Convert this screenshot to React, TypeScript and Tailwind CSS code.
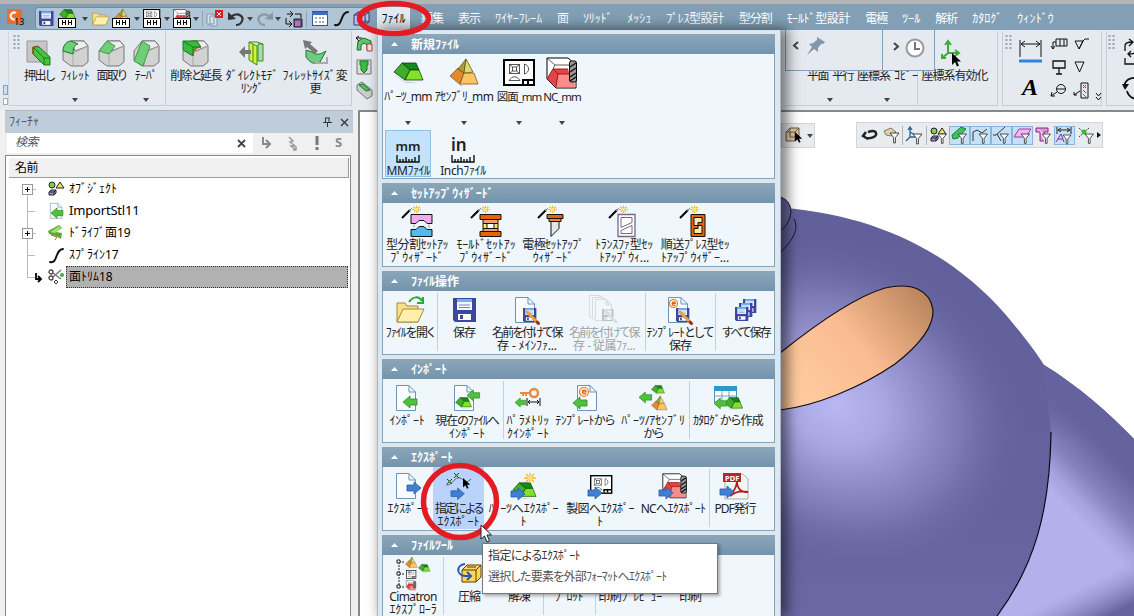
import React, { useLayoutEffect, useRef, useState } from "react";

type Kids = { children?: React.ReactNode };

/* Text run fitted to a given width by letter spacing. */
function T({ w, t, className = "" }: { w: number; t: string; className?: string }) {
  const ref = useRef<HTMLSpanElement>(null);
  const [ls, setLs] = useState(0);
  useLayoutEffect(() => {
    if (ref.current) setLs((w - ref.current.offsetWidth) / t.length);
  }, [w, t]);
  return (
    <span ref={ref} className={"inline-block shrink-0 whitespace-nowrap [font-feature-settings:'palt'] " + className} style={{ letterSpacing: ls }}>
      {t}
    </span>
  );
}

function I({ w = 32, h = 32, children, className = "" }: Kids & { w?: number; h?: number; className?: string }) {
  return (
    <svg width={w} height={h} viewBox={`0 0 ${w} ${h}`} className={"block shrink-0 overflow-visible " + className} fill="none">
      {children}
    </svg>
  );
}
function G({ x = 0, y = 0, s = 1, children }: Kids & { x?: number; y?: number; s?: number }) {
  return <g transform={`translate(${x} ${y}) scale(${s})`}>{children}</g>;
}
const Caret = ({ className = "" }: { className?: string }) => (
  <svg width="6" height="4" viewBox="0 0 6 4" className={"block shrink-0 " + className}><path d="M0 0H6L3 4Z" fill="#444" /></svg>
);

/* ---- drawing pieces ---- */
const Page = () => <path d="M.5.5H13L19.5 7V25.5H.5ZM13 .5V7H19.5" fill="#f8fbff" stroke="#6d93b5" />;
const ArrL = () => <path d="M0 6 7 0V3H14V9H7V12Z" fill="#4fc13c" stroke="#2b8c28" strokeWidth=".8" />;
const ArrR = () => <path d="M14 6 7 0V3H0V9H7V12Z" fill="#3f7fd4" stroke="#2a5da8" strokeWidth=".8" />;
const Part = () => (
  <g strokeLinejoin="round" stroke="#0f3a10" strokeWidth=".8">
    <path d="M0 12 11 20H26L14 21Z" fill="#888" stroke="none" opacity=".5" />
    <path d="M9 1H23L26 8H17Z" fill="#148a1e" />
    <path d="M9 1 17 8 12 18 1 10Z" fill="#3fae2a" />
    <path d="M17 8H26L30 18H12Z" fill="#7fe32a" />
  </g>
);
const Asm = () => (
  <g strokeLinejoin="round">
    <path d="M0 18 14 27H29L12 27Z" fill="#999" opacity=".5" />
    <path d="M1 17 9 9 15 14 11 25Z" fill="#e58a2c" stroke="#7a4610" strokeWidth=".7" />
    <path d="M15 14H25L29 25H11Z" fill="#ffc466" stroke="#7a4610" strokeWidth=".7" />
    <path d="M17 0 9 10 15 14Z" fill="#a8a030" stroke="#554c10" strokeWidth=".7" />
    <path d="M17 0 24 13 15 14Z" fill="#e0dc66" stroke="#554c10" strokeWidth=".7" />
  </g>
);
const Dwg = () => (
  <g stroke="#444" strokeWidth=".9">
    <rect x="1" y="1" width="30" height="25" fill="#fff" stroke="#000" strokeWidth="2" />
    <rect x="6.500" y="5.500" width="10" height="9" /><rect x="9.500" y="8" width="4" height="4" />
    <path d="M6.500 5.500 9.500 8M16.500 5.500 13.500 8M6.500 14.500 9.500 12M16.500 14.500 13.500 12M21.500 5V15C27 13 27 7 21.500 5M6 21.500H17C14 16.500 9 16.500 6 21.500" />
    <path d="M19 21H30M20 21V25M25 21V25" stroke="#000" strokeWidth="2" />
  </g>
);
const Nc = () => (
  <g strokeLinejoin="round">
    <path d="M1 1H22L30 8V31H10L1 22Z" fill="#fff" stroke="#000" />
    <path d="M1 22 7 12H22L28 30H10Z" fill="#e04646" />
    <path d="M12 17H25L30 30H10Z" fill="#fa8c8c" />
    <path d="M7 12H22M7 12 12 17H25M12 17 10 30M7 12 1 22" stroke="#a01010" strokeWidth=".9" />
    <path d="M1 1 9 8H23M9 8 7 12" stroke="#333" strokeWidth=".8" />
    <rect x="23.500" y="4" width="7" height="21" rx="2" fill="#999" stroke="#000" />
    <path d="M24 10 30 6M24 15 30 11M24 20 30 16M24 24 30 20" stroke="#111" strokeWidth="1.500" />
  </g>
);
const Disk = () => (
  <g><path d="M0 0H23V24H2L0 22Z" fill="#3e46a0" /><path d="M4 1H19V12H4Z" fill="#f2f7ff" /><path d="M4 1H19V4H4Z" fill="#6bb4ec" /><path d="M6 7H17M6 9.500H17" stroke="#6b8cc0" /><path d="M5 16H18V22H5Z" fill="#fff" /><path d="M7 17H10V21H7Z" fill="#3e46a0" /></g>
);
const Folder = () => (
  <g stroke="#a98a35" strokeLinejoin="round"><path d="M1 24V5H9L11 8H22V24Z" fill="#f7e08b" /><path d="M1 24 7 11H28L22 24Z" fill="#ffefad" /></g>
);
const Pencil = () => <path d="M1 1 12 12" stroke="#e8a040" strokeWidth="3" strokeLinecap="round" />;
const PencilEnd = () => <path d="M11 11 12.500 12.500" stroke="#a02c20" strokeWidth="3" strokeLinecap="round" />;
const Wand = () => (
  <g><path d="M1 12 9 4" stroke="#000" strokeWidth="2" /><path d="M8 5 11 2" stroke="#888" /><path d="M11 3.500H20M15.500 0V7M12.500 1 18.500 6M18.500 1 12.500 6" stroke="#f5b400" strokeWidth="1.200" strokeDasharray="2 .6" /><circle cx="15.500" cy="3.500" r="1.500" fill="#ffef7a" /></g>
);
const Cursor = () => <path d="M0 0V12L3 9 5 13.500 7 12.500 5 8.500H9Z" fill="#000" />;
const CubeShape = ({ children }: Kids) => (
  <g stroke="#777" strokeLinejoin="round"><path d="M1 11 9 1H22L26 6V22L21 26H9L1 20Z" fill="#d2d2d2" /><path d="M9 1H22L26 6 13 11Z" fill="#eee" /><path d="M11 13V26M11 13 26 6" stroke="#aaa" />{children}</g>
);
const HH = () => <g shapeRendering="crispEdges"><path d="M0 8H17V17H0Z" fill="#fff" stroke="#000" /><path d="M4 10V15M4 12.500H7M7 10V15M10 10V15M10 12.500H13M13 10V15" stroke="#000" /></g>;
const Funnel = () => <path d="M0 0H10L6 5V11H4V5Z" fill="#fff" stroke="#333" />;
const Trio = () => <g stroke="#222"><circle cx="4" cy="4" r="3" fill="#7cd04c" /><path d="M12 1 16 7H8Z" fill="#f3e36a" /><path d="M1 11 3 9H8V12L6 14H1ZM1 11H6V14M6 11 8 9" fill="#a394d8" /></g>;
const EBadge = () => <g><circle cx="5" cy="5" r="4.500" fill="#fff0dd" stroke="#f07a28" strokeWidth="1.200" /><path d="M3 5H7C7 2.500 3.500 2.500 3.500 5.500 4 8 6.500 7 7 6.500" stroke="#e05a10" strokeWidth="1.200" /></g>;
const S = () => <path d="M1 14C9 16 6 1 14 1" stroke="#111" strokeWidth="2" strokeLinecap="round" />;

/* ---- quick bar ---- */
function QCell({ w, children }: Kids & { w: number }) {
  return <div className="flex h-full shrink-0 items-center justify-center" style={{ width: w }}>{children}</div>;
}
const VSep = () => <div className="h-4 w-px shrink-0 bg-[#8da3b6]" />;

function TitleBar() {
  const menus: [string, number][] = [
    ["編集", 22], ["表示", 22], ["ﾜｲﾔｰﾌﾚｰﾑ", 47], ["面", 11], ["ｿﾘｯﾄﾞ", 29], ["ﾒｯｼｭ", 24], ["ﾌﾟﾚｽ型設計", 57], ["型分割", 33],
    ["ﾓｰﾙﾄﾞ型設計", 63], ["電極", 22], ["ﾂｰﾙ", 18], ["解析", 22], ["ｶﾀﾛｸﾞ", 30], ["ｳｨﾝﾄﾞｳ", 37],
  ];
  return (
    <header className="h-[30px] shrink-0 border-t-[4px] border-[#b4b4b4] bg-[#829fb5]">
      <div className="flex h-[26px]">
        <div className="w-[35px] shrink-0 pl-[7px] pt-[5px]">
          <I w={18} h={18}><rect width="15" height="15" rx="2" fill="#ee6b2d" /><path d="M9 4A3.500 3.500 0 1 0 9 10" stroke="#fff" strokeWidth="2" /><text x="7" y="15.500" fontSize="9" fontWeight="500" fill="#111" fontFamily="Noto Sans">13</text></I>
        </div>
        <div className="mt-[3px] flex h-[23px] w-[331px] shrink-0 items-center rounded-[3px] border border-[#6f8da6] bg-[#b0c5d6] pl-[3px]">
          <QCell w={15}><I w={15} h={15}><G s={0.63}><Disk /></G></I></QCell>
          <QCell w={26}><I w={18} h={17}><G x={1} y={-1} s={0.55}><Part /></G><HH /></I></QCell>
          <QCell w={10}><Caret /></QCell>
          <QCell w={21}><I w={18} h={16}><G y={-1} s={0.62}><Folder /></G></I></QCell>
          <QCell w={20}><I w={18} h={17}><G x={2} y={-1} s={0.52}><Asm /></G><HH /></I></QCell>
          <QCell w={12}><Caret /></QCell>
          <QCell w={17}><I w={17} h={17}><G y={-1} s={0.54}><Dwg /></G><HH /></I></QCell>
          <QCell w={13}><Caret /></QCell>
          <QCell w={17}><I w={17} h={17}><G y={-1} s={0.55}><Nc /></G><HH /></I></QCell>
          <QCell w={12}><Caret /></QCell>
          <VSep />
          <QCell w={23}><I w={17} h={17}><path d="M1 4H8V14H1ZM4 6H11V16H4Z" fill="#d5e3ef" stroke="#8399ab" /><path d="M9 0H17V8H9Z" fill="#d82020" /><path d="M11 2 15 6M15 2 11 6" stroke="#fff" /></I></QCell>
          <QCell w={20}><I w={17} h={15}><path d="M4 5C11 1 16 6 14 10 13 13 10 14 8 14" stroke="#333" strokeWidth="2.200" /><path d="M0 1V9L8 8Z" fill="#333" /></I></QCell>
          <QCell w={8}><Caret /></QCell>
          <QCell w={20}><I w={17} h={15}><path d="M13 5C6 1 1 6 3 10 4 13 7 14 9 14" stroke="#8898a5" strokeWidth="2.200" /><path d="M17 1V9L9 8Z" fill="#8898a5" /></I></QCell>
          <QCell w={8}><Caret /></QCell>
          <QCell w={24}><I w={17} h={16}><path d="M1 3H7M4 0 7 3 4 6M0 7V13H6M3 10 6 13 3 16M9 3H15V7" stroke="#111" /><path d="M8 8H16V16H8Z" fill="#7b4a8c" stroke="#222" /><path d="M9 10H14V15H9Z" fill="#a87ab8" /></I></QCell>
          <VSep />
          <QCell w={25}><I w={16} h={15}><rect x=".5" y=".5" width="15" height="14" fill="#fff" stroke="#2f55a4" /><path d="M0 1H16V4H0Z" fill="#3f6cc0" /><path d="M3 7H5M3 11H5M7 7H13M7 11H13" stroke="#456" strokeDasharray="2 1" /></I></QCell>
          <QCell w={18}><I w={15} h={15}><S /></I></QCell>
          <QCell w={22}><I w={17} h={15}><path d="M1 4 5 1H16V11L12 14H1ZM1 4H12V14M12 4 16 1M5 1V11H16" fill="#b9bce8" stroke="#35376e" /></I></QCell>
        </div>
        <div className="ml-[11px] mt-[3px] flex h-[23px] w-[33px] shrink-0 items-center justify-center bg-[#e3ebf2] text-[12px] text-black"><T t="ﾌｧｲﾙ" w={24} /></div>
        <nav className="ml-[11px] flex items-center gap-[15px] pt-[3px] text-[12px] text-white">
          {menus.map(([t, w]) => <T key={t} t={t} w={w} />)}
        </nav>
      </div>
    </header>
  );
}

function Grip() {
  return <I w={7} h={15}><path d="M1.500 0V15M5.500 0V15" stroke="#8fa4b5" strokeWidth="2" strokeDasharray="2 2" /></I>;
}
function Tool({ w, icon, lines, caret }: { w: number; icon: React.ReactNode; lines: [string, number][]; caret?: boolean }) {
  return (
    <div className="relative flex h-full shrink-0 flex-col items-center pt-[8px] text-[12px] leading-[13px] text-[#222]" style={{ width: w }}>
      <div className="mb-[2px] flex h-[28px] items-center">{icon}</div>
      {lines.map(([t, lw]) => <T key={t} t={t} w={lw} />)}
      {caret && <Caret className="absolute bottom-[3px] left-1/2 -ml-[3px]" />}
    </div>
  );
}

function Ribbon() {
  const green = "#6fce78";
  return (
    <div className="flex h-[80px] shrink-0 bg-[#e4eaf0] pt-[1px]">
      <div className="flex h-[74px] w-[9px] shrink-0 flex-col justify-end gap-[3px] border-r border-[#cfd6dd] pl-[3px]">
        <div className="h-[10px] w-[5px] border border-[#7ea6cb] bg-[#c9e0f5]" /><div className="h-[7px] w-[5px] border border-[#aaa] bg-white" />
      </div>
      <div className="flex h-[75px] w-[343px] shrink-0 border-b border-r border-[#c6ced6]">
        <div className="w-[14px] shrink-0 pl-[4px] pt-[4px]"><Grip /></div>
        <Tool w={32} lines={[["押出し", 30]]} icon={<I w={26} h={26}><path d="M1 1H21V22H1Z" fill="#c6c6c6" stroke="#999" /><path d="M7 7 12 6 24 17V25H18L7 14Z" fill="#48c23f" stroke="#187a20" /><path d="M7 7V14L18 25M18 18H24M7 7 18 18V25" stroke="#187a20" /><path d="M7 14V7H13" stroke="#e03010" /></I>} />
        <Tool w={40} caret lines={[["ﾌｨﾚｯﾄ", 29]]} icon={<I w={27} h={27}><CubeShape><path d="M1 11C1 5 5 1 9 1L16 4C12 5 11 9 11 14L1 11" fill={green} stroke="#187a20" /></CubeShape></I>} />
        <Tool w={32} lines={[["面取り", 29]]} icon={<I w={27} h={27}><CubeShape><path d="M1 11 9 1 17 6 11 14Z" fill={green} stroke="#3f9a48" /></CubeShape></I>} />
        <Tool w={38} caret lines={[["ﾃｰﾊﾟ", 22]]} icon={<I w={27} h={27}><CubeShape><path d="M1 21 9 1 17 6 10 26Z" fill={green} stroke="#3f9a48" /></CubeShape></I>} />
        <div className="h-full w-px shrink-0 bg-[#c6ced6]" />
        <Tool w={59} lines={[["削除と延長", 51]]} icon={<I w={27} h={27}><CubeShape><path d="M1 1H15L19 7C13 7 11 11 11 16L1 10Z" fill="#3bbb3e" stroke="#187a20" /><path d="M1 1 11 7V16M11 7H19" stroke="#187a20" /><path d="M11 16C11 10 14 8 19 7" stroke="#d04020" /></CubeShape></I>} />
        <Tool w={54} lines={[["ﾀﾞｲﾚｸﾄﾓﾃﾞ", 52], ["ﾘﾝｸﾞ", 22]]} icon={<I w={26} h={26}><path d="M19 4H24V21H19Z" fill="#a8dcb4" stroke="#3a8c20" /><path d="M10 2 18 6V25L10 20Z" fill="#d8f03c" stroke="#3a8c20" /><path d="M10 2H18L24 4M14 4V22" stroke="#3a8c20" /><path d="M0 12 6 6V10H12V14H6V18Z" fill="#777" /></I>} />
        <Tool w={72} lines={[["ﾌｨﾚｯﾄｻｲｽﾞ変", 65], ["更", 11]]} icon={<I w={25} h={26}><path d="M3 10 9 12C13 16 18 14 23 11L17 22C12 25 7 23 3 17Z" fill="#71c982" stroke="#187a20" /><path d="M12 23H24V17" stroke="#aaa" strokeWidth="2" /><path d="M0 0 9 2 7 4 15 11 12 14 4 7 2 9Z" fill="#777" /></I>} />
      </div>
      <div className="flex h-[75px] w-[433px] shrink-0 flex-col gap-[6px] pl-[4px] pt-[5px]">
        <I w={17} h={17}><path d="M2 5 8 2 15 5V14H11V9L8 7 5 9V14H1Z" fill="#5fc66a" stroke="#226a2a" /><path d="M11 8H16V15H11Z" fill="#e7e7e7" stroke="#c04020" /><path d="M0 2H6M3 0 0 2 3 5" stroke="#111" /></I>
        <I w={17} h={17}><path d="M1 1H15V15H1Z" fill="#dcdcdc" stroke="#777" /><path d="M4 2H12V6H11V11L8 14 5 11V6H4Z" fill="#3cba46" stroke="#187a20" /></I>
        <I w={17} h={17}><path d="M1 3 6 0 16 8V14L11 17 1 8Z" fill="#ccc" stroke="#777" /><path d="M3 3 7 2 14 8 10 9Z" fill="#56c160" stroke="#187a20" /></I>
      </div>
      <div className="flex h-[75px] w-[213px] shrink-0 border-b border-r border-[#c6ced6] text-[12px] leading-[13px] text-[#222]">
        <div className="relative flex w-[133px] shrink-0 items-start border-r border-[#c6ced6] pl-[22px] pt-[38px]">
          <div className="flex gap-[4px]"><T t="平面" w={21} /><T t="平行" w={21} /><T t="座標系" w={33} /><T t="ｺﾋﾟｰ" w={24} /></div>
          <Caret className="absolute bottom-[3px] left-[42px]" /><Caret className="absolute bottom-[3px] left-[99px]" />
        </div>
        <Tool w={73} lines={[["座標系有効化", 66]]} icon={<I w={22} h={26} className="relative left-[-4px]"><path d="M8 2V13L2 18M8 13H18M5 5 8 1 11 5M15 10 19 13 15 16M2 14V18H6" stroke="#3faa3c" strokeWidth="2" /><G x={12} y={13}><Cursor /></G></I>} />
      </div>
      <div className="ml-[4px] flex h-[75px] w-[100px] shrink-0 border-x border-b border-[#c6ced6]">
        <div className="w-[16px] shrink-0 pl-[2px] pt-[4px]"><Grip /></div>
        <div className="flex w-[28px] shrink-0 flex-col items-start pt-[8px]">
          <I w={24} h={24}><path d="M1 1V18M22 1V18M2 5H21M6 2 2 5 6 8M17 2 21 5 17 8" stroke="#111" /><path d="M0 22H23" stroke="#3580dc" strokeWidth="3" /></I>
          <span className="mt-[11px] pl-[3px] font-[Liberation_Serif] text-[24px] font-bold italic leading-[26px]">A</span>
        </div>
        <div className="grid h-[74px] grid-cols-[23px_22px] grid-rows-[22px_24px_24px] pl-[4px] pt-[6px]">
          <I w={18} h={17}><path d="M5 2H16V9H5ZM9 2V9M13 2V9M5 5H2V12M0 9 2 12 4 9" stroke="#111" /></I>
          <I w={17} h={17}><path d="M1 4H9L5 12ZM5 12 9 4 11 2H15" stroke="#111" /></I>
          <I w={18} h={17}><path d="M2 2H14V9H2ZM8 9V15M5 15H11" stroke="#111" strokeWidth="1.300" /></I>
          <I w={17} h={17}><path d="M1 3H10L5.500 13Z" stroke="#111" /></I>
          <I w={18} h={17}><circle cx="10" cy="6" r="4.500" stroke="#111" /><path d="M6 6H14M6 9 0 13M1 9 0 13 4 13" stroke="#111" /></I>
          <I w={17} h={17}><path d="M7 0H14V15H7ZM6 8 0 12M0 9V12H3" stroke="#111" /><path d="M9 2 12 5M12 2 9 5M9 7 12 10" stroke="#c02080" /><path d="M9 11 12 14" stroke="#1a80c0" /></I>
        </div>
        <I w={8} h={10} className="relative left-[-1px] top-[61px]"><path d="M1 1 3.500 4 6 1M1 5 3.500 8 6 5" stroke="#111" /></I>
      </div>
      <div className="ml-[4px] flex h-[75px] w-[30px] shrink-0 overflow-hidden border-b border-l border-[#c6ced6]">
        <div className="w-[15px] shrink-0 pl-[1px] pt-[4px]"><Grip /></div>
        <I w={15} h={70}><path d="M3 20V15C3 12 6 11 10 11M7 8 11 11 7 15M14 18C14 22 12 23 7 23M9 20 6 23 9 26M3 27V33H14" stroke="#111" strokeWidth="1.300" /><path d="M2 56C3 49 8 46 15 47M5 60C6 64 9 67 14 68" stroke="#111" strokeWidth="1.800" /><path d="M0 53H7L3 59Z" fill="#111" /></I>
      </div>
    </div>
  );
}

/* ---- feature tree ---- */
function FeaturePanel() {
  const rows: { t: string; w: number; plus?: boolean; sel?: boolean; icon: React.ReactNode }[] = [
    { t: "ｵﾌﾞｼﾞｪｸﾄ", w: 48, plus: true, icon: <I w={17} h={16}><Trio /></I> },
    { t: "ImportStl11", w: 71, icon: <I w={17} h={16}><G x={2} s={0.6}><Page /></G><G x={3} y={5} s={0.85}><ArrL /></G></I> },
    { t: "ﾄﾞﾗｲﾌﾞ面19", w: 62, plus: true, icon: <I w={17} h={16}><path d="M0 6 11 0 14 3 8 7 14 8 13 14 8 11 1 9Z" fill="#58a832" /><path d="M2 7 11 1 13 3 7 8Z" fill="#a6dc74" /><path d="M3 10 9 12 7 15" stroke="#b06a2c" /></I> },
    { t: "ｽﾌﾟﾗｲﾝ17", w: 50, icon: <I w={15} h={15}><S /></I> },
    { t: "面ﾄﾘﾑ18", w: 44, sel: true, icon: <I w={17} h={16}><circle cx="3" cy="3" r="2" stroke="#444" strokeWidth="1.300" /><circle cx="3" cy="9" r="2" stroke="#444" strokeWidth="1.300" /><path d="M5 4 13 10M5 8 13 1" stroke="#777" strokeWidth="1.500" /><circle cx="14" cy="6" r="2" fill="#35b04a" /><path d="M8 11 10 13 8 15 6 13Z" stroke="#333" /></I> },
  ];
  return (
    <aside className="flex w-[358px] shrink-0 flex-col bg-[#f0f0f0] px-[5px]">
      <div className="flex h-[23px] w-[348px] shrink-0 items-center border-t border-[#a9b7c3] bg-[#bfccd9] pl-[4px] text-[12px] text-[#4a5b6b]">
        <T t="ﾌｨｰﾁｬ" w={30} />
        <I w={9} h={10} className="ml-auto mr-[8px]"><path d="M2 1H7M2.500 1V5M6 1V5M0 5.500H9M4.500 5V10" stroke="#333" /></I>
        <I w={9} h={9} className="mr-[4px]"><path d="M1 1 8 8M8 1 1 8" stroke="#333" strokeWidth="1.300" /></I>
      </div>
      <div className="flex h-[22px] shrink-0 items-start">
        <div className="ml-[2px] flex h-[20px] w-[246px] items-center bg-white pl-[8px] text-[12px] italic text-[#555]">
          <T t="検索" w={23} className="relative -top-px" /><I w={9} h={9} className="ml-auto mr-[7px]"><path d="M1 1 8 8M8 1 1 8" stroke="#444" strokeWidth="1.800" /></I>
        </div>
        <div className="flex h-[20px] flex-1 items-center pl-[9px] text-[#888]">
          <I w={9} h={12}><path d="M1 0V7H7M4 3 8 7 4 11" stroke="#888" strokeWidth="2" /></I>
          <I w={9} h={15} className="ml-[17px]"><path d="M1 1 5 5 2 6 7 10 3 10 8 14M5 14H8V11" stroke="#999" strokeWidth="1.500" /></I>
          <I w={4} h={14} className="ml-[18px]"><path d="M2 0V9M2 11V14" stroke="#777" strokeWidth="3" /></I>
          <span className="ml-[16px] text-[13px] font-bold">S</span>
        </div>
      </div>
      <div className="w-[346px] flex-1 border-x border-t border-[#888] bg-white pl-[3px] pt-[2px]">
        <div className="flex h-[20px] w-[340px] items-center border-b border-r border-[#999] bg-[#f0f0f0] pl-[6px] text-[12px] text-black"><T t="名前" w={23} /></div>
        <div className="relative">
          <div className="absolute left-[18px] top-[12px] h-[88px] w-px bg-[#bbb]" />
          {rows.map((r) => (
            <div key={r.t} className="relative flex h-[22px] items-center">
              <div className="flex w-[32px] shrink-0 items-center pl-[13px]">
                {r.plus ? <><I w={11} h={11}><rect x=".5" y=".5" width="10" height="10" fill="#fff" stroke="#999" /><path d="M3 5.500H8M5.500 3V8" stroke="#000" /></I><div className="h-px w-[3px] bg-[#bbb]" /></> : <div className="ml-[5px] h-px w-[8px] shrink-0 bg-[#bbb]" />}
              </div>
              {r.sel ? <I w={6} h={9} className="-ml-[6px]"><path d="M1 0V6H5M3 3 6 6 3 9" stroke="#000" strokeWidth="1.800" /></I> : null}
              <div className="ml-[5px] flex w-[20px] shrink-0 justify-center">{r.icon}</div>
              <div className={"flex h-[22px] flex-1 items-center text-[13px] text-black " + (r.sel ? "mr-[2px] border border-dotted border-[#333] bg-[#b1b1b1] pl-[2px]" : "pl-[3px]")}><T t={r.t} w={r.w} className={r.t[0] === "I" ? "" : "text-[12px]"} /></div>
            </div>
          ))}
        </div>
      </div>
    </aside>
  );
}

/* ---- viewport ---- */
function Viewport() {
  const fs: { on?: boolean; d: React.ReactNode; w: number; sep?: boolean }[] = [
    { w: 22, d: <path d="M3 9C4 13 17 11 15 6 14 3 10 4 7 5M5 5 2 9 7 12" stroke="#222" strokeWidth="2.500" /> },
    { w: 22, d: <><path d="M1 4 8 1 13 5 8 9 3 8Z" fill="#e3cfa0" stroke="#777" /><G x={7} y={6} s={0.9}><Funnel /></G></> },
    { w: 24, sep: true, d: <><path d="M4 1V10H13M2 3 4 0 6 3M4 10 0 14M4 5 9 8" stroke="#2a6090" strokeWidth="1.300" /><G x={7} y={7} s={0.9}><Funnel /></G></> },
    { w: 23, sep: true, d: <><Trio /><G x={8} y={7} s={0.85}><Funnel /></G></> },
    { w: 21, on: true, d: <><path d="M1 8 10 0 15 2 7 11 2 12Z" fill="#3fc25a" stroke="#158030" /><G x={7} y={7} s={0.85}><Funnel /></G></> },
    { w: 21, on: true, d: <><path d="M1 14V5L5 3 10 6 15 2" stroke="#333" /><G x={7} y={7} s={0.85}><Funnel /></G></> },
    { w: 21, on: true, d: <><path d="M0 8H3L12 0M4 7 8 14" stroke="#333" /><G x={7} y={7} s={0.85}><Funnel /></G></> },
    { w: 21, on: true, d: <><path d="M5 2H17L12 10H0Z" fill="#f0b8ee" stroke="#b030a8" /><G x={7} y={7} s={0.85}><Funnel /></G></> },
    { w: 21, d: <><path d="M1 1H13V5H9V9H13M5 5V14H9M1 1V5H5" fill="#d99ad8" stroke="#902090" /><G x={7} y={7} s={0.85}><Funnel /></G></> },
    { w: 21, on: true, d: <><path d="M1 0V7M15 0V7M2 3H14M5 1 2 3 5 5M11 1 14 3 11 5" stroke="#222" /><path d="M0 15 5 7 8 15M2 12H7" stroke="#a020a0" /><G x={7} y={8} s={0.8}><Funnel /></G></> },
    { w: 22, d: <><path d="M1 1 11 10M11 1 1 10" stroke="#444" strokeDasharray="2 1" /><circle cx="6" cy="5" r="2.500" fill="#35c02c" /><G x={7} y={7} s={0.85}><Funnel /></G></> },
  ];
  return (
    <main className="relative flex-1 border-l-2 border-t-2 border-[#888] bg-white">
      <svg width="774" height="504" viewBox="360 112 774 504" className="absolute left-0 top-0 block" fill="none">
        <defs>
          <radialGradient id="hi" gradientUnits="userSpaceOnUse" cx="0" cy="0" r="1" gradientTransform="translate(836 405) rotate(28) scale(200 160)">
            <stop offset="0" stopColor="#b9b6f4" /><stop offset=".25" stopColor="#aaa8e3" /><stop offset=".65" stopColor="#7f7db8" stopOpacity=".9" /><stop offset="1" stopColor="#6462a0" stopOpacity="0" />
          </radialGradient>
          <linearGradient id="bs" x1="0" y1="0" x2="0" y2="1"><stop offset="0" stopColor="#61609a" /><stop offset=".7" stopColor="#64629d" /><stop offset="1" stopColor="#6b69a5" /></linearGradient>
          <linearGradient id="h2" gradientUnits="userSpaceOnUse" x1="1110" y1="455" x2="1062" y2="502">
            <stop offset="0" stopColor="#65639e" /><stop offset=".5" stopColor="#8583bf" /><stop offset=".8" stopColor="#a5a3e0" /><stop offset="1" stopColor="#b3b0ec" />
          </linearGradient>
          <linearGradient id="or" x1="920" y1="295" x2="800" y2="395" gradientUnits="userSpaceOnUse"><stop offset="0" stopColor="#bd875e" /><stop offset=".5" stopColor="#fabb91" /><stop offset="1" stopColor="#ffcb9f" /></linearGradient>
          <linearGradient id="cn" x1="1088" y1="565" x2="1112" y2="614" gradientUnits="userSpaceOnUse"><stop offset=".3" stopColor="#8a88c5" stopOpacity="0" /><stop offset="1" stopColor="#6664a0" /></linearGradient>
          <linearGradient id="up" x1="0" y1="365" x2="0" y2="440" gradientUnits="userSpaceOnUse"><stop offset=".3" stopColor="#65639e" /><stop offset="1" stopColor="#65639e" stopOpacity="0" /></linearGradient>
          <clipPath id="rt"><path d="M1044 365C1078 386 1108 412 1134 439V616H997C1035 565 1049 510 1051 432Z" /></clipPath>
        </defs>
        <path d="M770 207C870 212 950 250 1006 315 1022 334 1034 349 1044 365 1078 386 1108 412 1134 439V616H770Z" fill="url(#bs)" />
        <path d="M770 207C870 212 950 250 1006 315 1022 334 1034 349 1044 365L1051 400V432C1049 510 1035 565 997 616H770Z" fill="url(#hi)" />
        <g clipPath="url(#rt)"><rect x="990" y="360" width="144" height="256" fill="url(#h2)" /><rect x="990" y="360" width="144" height="90" fill="url(#up)" /><rect x="990" y="540" width="144" height="76" fill="url(#cn)" /></g>
        <path d="M1051 432C1050 510 1035 565 997 616" stroke="#08081a" strokeWidth="1.200" />
        <path d="M780 353C820 321 858 296 885 288 912 282 930 290 933 310 934 330 913 350 895 364 860 388 815 406 780 410Z" fill="url(#or)" stroke="#140c14" strokeWidth="1.200" />
        <path d="M775 196C788 197 793 207 790 217 788 224 784 228 775 236Z" fill="#6b69a0" stroke="#15152a" />
        <path d="M794 219C800 230 791 242 780 253" stroke="#15152a" />
      </svg>
      <div className="absolute left-[421px] top-[11px] flex h-[25px] w-[34px] items-center gap-[5px] border border-[#d2d6da] bg-[#e9ecef] pl-[3px]">
        <I w={17} h={17}><path d="M1 5 5 1H14V11L10 14H1ZM1 5H10V14M10 5 14 1M5 1V10H14" fill="#dfc9a4" stroke="#6d5a42" /><G x={10} y={5} s={0.8}><Cursor /></G></I><Caret />
      </div>
      <div className="absolute left-[496px] top-[10px] flex h-[26px] w-[247px] items-center border border-[#d2d6da] bg-[#e9ecef] pl-[1px]">
        {fs.map((f, i) => (
          <div key={i} className={"flex h-[19px] shrink-0 items-center justify-center " + (f.on ? "border border-[#8ab4d8] bg-[#c4e1f8]" : f.sep ? "border-l border-[#aeb6be]" : "")} style={{ width: f.w }}>
            <I w={17} h={17}>{f.d}</I>
          </div>
        ))}
        <I w={4} h={6}><path d="M0 0 4 3 0 6Z" fill="#111" /></I>
      </div>
    </main>
  );
}

/* ---- file menu ---- */
type Item = { w: number; icon: React.ReactNode; lines: [string, number][]; sep?: boolean; dim?: boolean; on?: boolean };
function Head({ t, w }: { t: string; w: number }) {
  return (
    <div className="flex h-[20px] items-center bg-linear-to-b from-[#8ba6b9] to-[#7394ae] pl-[9px] text-[12px] font-bold text-white">
      <I w={7} h={4} className="mr-[13px]"><path d="M0 4H7L3.500 0Z" fill="#fff" /></I><T t={t} w={w} className="relative top-px" />
    </div>
  );
}
function Section({ t, tw, items }: { t: string; tw: number; items: Item[] }) {
  return (
    <section className="mb-[4px] h-[84px] shrink-0">
      <Head t={t} w={tw} />
      <div className="flex h-[64px] border border-t-0 border-[#86a3b9] bg-[#eff6fc]">
        {items.map((it, i) => (
          <div key={i} className={"relative flex h-[62px] shrink-0 flex-col items-center pt-[3px] text-[12px] leading-[13px] " + (it.dim ? "text-[#a0a0a0] " : "text-[#222] ") + (it.on ? "bg-[#b9d3fc]" : "")} style={{ width: it.w }}>
            {it.sep && <div className="absolute left-0 top-[2px] h-[58px] w-px bg-[#c3d0da]" />}
            <div className={"flex h-[32px] shrink-0 items-center " + (it.dim ? "opacity-30 grayscale" : "")}>{it.icon}</div>
            {it.lines.map(([s, w]) => <T key={s} t={s} w={w} />)}
          </div>
        ))}
      </div>
    </section>
  );
}
const wiz = (d: React.ReactNode) => <I w={32} h={32}><Wand /><G x={9} y={7.5}>{d}</G></I>;
const Ruler = () => <path d="M1 0V7H23V0M4 7V4M7 7V4M10 7V2M13 7V4M16 7V4M19 7V2" stroke="#111" strokeWidth="1.400" />;

function FileMenu() {
  const make: [number, React.ReactNode, string, number][] = [
    [50, <I w={30} h={21}><Part /></I>, "ﾊﾟｰﾂ_mm", 47],
    [62, <I w={30} h={27}><Asm /></I>, "ｱｾﾝﾌﾞﾘ_mm", 58],
    [48, <I w={32} h={27}><Dwg /></I>, "図面_mm", 45],
    [38, <I w={32} h={32}><Nc /></I>, "NC_mm", 38],
  ];
  return (
    <div className="absolute left-[377px] top-[30px] flex h-[586px] w-[404px] flex-col border-x border-[#a4b8c8] bg-[#dce8f1] px-[4px] pt-[4px] shadow-[5px_0_12px_2px_rgba(0,0,0,0.5)]">
      <section className="mb-[4px] h-[145px] w-[393px] shrink-0">
        <Head t="新規ﾌｧｲﾙ" w={48} />
        <div className="h-[125px] border border-t-0 border-[#86a3b9] bg-[#eff6fc]">
          <div className="flex">
            {make.map(([w, icon, t, tw]) => (
              <div key={t} className="flex h-[76px] shrink-0 flex-col items-center pt-[1px] text-[12px] leading-[13px] text-[#222]" style={{ width: w }}>
                <div className="flex h-[35px] items-center">{icon}</div>
                <T t={t} w={tw} className={t.length < 6 ? "text-[11.5px]" : ""} /><Caret className="mt-[18px]" />
              </div>
            ))}
          </div>
          <div className="flex text-[12px] leading-[13px] text-[#222]">
            <div className="ml-[2px] flex h-[47px] w-[46px] flex-col items-center border border-[#8fbfe3] bg-[#c2e3fb]">
              <span className="mt-[6px] h-[18px] font-[Noto_Sans] text-[13px] font-semibold leading-[18px]">mm</span><I w={24} h={9}><Ruler /></I><T t="MMﾌｧｲﾙ" w={43} />
            </div>
            <div className="ml-[8px] flex h-[47px] w-[48px] flex-col items-center pt-[1px]">
              <span className="mt-[4px] h-[20px] w-[24px] font-[Noto_Sans] text-[17px] font-semibold leading-[20px]">in</span><I w={24} h={9}><Ruler /></I><T t="Inchﾌｧｲﾙ" w={46} />
            </div>
          </div>
        </div>
      </section>
      <div className="w-[393px]">
        <Section t="ｾｯﾄｱｯﾌﾟｳｨｻﾞｰﾄﾞ" tw={82} items={[
          { w: 68, lines: [["型分割ｾｯﾄｱｯ", 62], ["ﾌﾟｳｨｻﾞｰﾄﾞ", 53]], icon: wiz(<g stroke="#111"><path d="M1 1H22V10H17L14 7H9L6 10H1Z" fill="#efaaf0" /><path d="M4 11V14M19 11V14" stroke="#999" /><path d="M1 23V16H6L9 13H14L17 16H22V23Z" fill="#55b9ee" /></g>) },
          { w: 70, lines: [["ﾓｰﾙﾄﾞｾｯﾄｱｯ", 59], ["ﾌﾟｳｨｻﾞｰﾄﾞ", 53]], icon: wiz(<g stroke="#111"><path d="M1 1H22V6H1ZM1 18H22V23H1Z" fill="#e8620c" /><path d="M4 6H19V10H4ZM4 15H19V18H4Z" fill="#f0a070" /><path d="M4 10H19V15H4Z" fill="#f6e95a" /><path d="M8 10H15V15H8Z" fill="#fff" /></g>) },
          { w: 64, lines: [["電極ｾｯﾄｱｯﾌﾟ", 61], ["ｳｨｻﾞｰﾄﾞ", 40]], icon: wiz(<g stroke="#111"><path d="M1 1H17V5H1Z" fill="#e8620c" /><path d="M3 5H15V8H3Z" fill="#f08a3c" /><path d="M5 8H13V15L5 23Z" fill="#e4e4e4" /></g>) },
          { w: 78, lines: [["ﾄﾗﾝｽﾌｧ型ｾｯ", 58], ["ﾄｱｯﾌﾟｳｨ...", 50]], icon: wiz(<g stroke="#766a80"><path d="M1 1H18V23H1Z" fill="#fff" strokeWidth="1.300" /><path d="M4 4H15V9L4 14ZM15 12V20H4V17Z" /></g>) },
          { w: 64, lines: [["順送ﾌﾟﾚｽ型ｾｯ", 68], ["ﾄｱｯﾌﾟｳｨｻﾞｰ...", 68]], icon: wiz(<g stroke="#111"><path d="M3 1H17V23H3Z" fill="#e8620c" /><path d="M6 4H14V9H10V12H6ZM14 20H6V15H10V12H14Z" fill="#ffe8a8" /></g>) },
        ]} />
        <Section t="ﾌｧｲﾙ操作" tw={48} items={[
          { w: 54, lines: [["ﾌｧｲﾙを開く", 48]], icon: <I w={28} h={26}><G y={1}><Folder /></G><path d="M13 5C17-1 23-1 26 4M27 0V6H21" stroke="#2ca83a" strokeWidth="2" /></I> },
          { w: 54, sep: true, lines: [["保存", 22]], icon: <I w={23} h={24}><Disk /></I> },
          { w: 72, lines: [["名前を付けて保", 70], ["存 - ﾒｲﾝﾌｧ...", 60]], icon: <I w={24} h={26}><Page /><G x={8} y={11} s={0.58}><Disk /></G><G x={11} y={14}><Pencil /><PencilEnd /></G></I> },
          { w: 82, dim: true, lines: [["名前を付けて保", 70], ["存 - 従属ﾌｧ...", 62]], icon: <I w={28} h={28}><G x={-1} y={-1} s={0.85}><Page /></G><G x={2} y={1} s={0.85}><Page /></G><G x={5} y={3} s={0.85}><Page /></G><G x={12} y={13} s={0.5}><Disk /></G><G x={14} y={14}><Pencil /></G></I> },
          { w: 70, sep: true, lines: [["ﾃﾝﾌﾟﾚｰﾄとして", 66], ["保存", 22]], icon: <I w={24} h={26}><Page /><G y={2} x={1} s={0.9}><EBadge /></G><G x={8} y={11} s={0.58}><Disk /></G><G x={11} y={14}><Pencil /><PencilEnd /></G></I> },
          { w: 62, sep: true, lines: [["すべて保存", 48]], icon: <I w={22} h={22}><G x={8} s={0.58}><Disk /></G><G x={4} y={4} s={0.58}><Disk /></G><G y={8} s={0.58}><Disk /></G></I> },
        ]} />
        <Section t="ｲﾝﾎﾟｰﾄ" tw={36} items={[
          { w: 48, lines: [["ｲﾝﾎﾟｰﾄ", 35]], icon: <I w={22} h={26}><Page /><G x={7} y={11}><ArrL /></G></I> },
          { w: 72, lines: [["現在のﾌｧｲﾙへ", 64], ["ｲﾝﾎﾟｰﾄ", 36]], icon: <I w={26} h={26}><Page /><G x={1} y={12} s={0.55}><Part /></G><G x={13} y={5} s={0.9}><ArrL /></G></I> },
          { w: 50, sep: true, lines: [["ﾊﾟﾗﾒﾄﾘｯ", 43], ["ｸｲﾝﾎﾟｰﾄ", 42]], icon: <I w={26} h={24}><circle cx="19" cy="7" r="4" stroke="#ec8a3a" strokeWidth="2.500" /><path d="M15 7H5M8 7V10M11 7V10" stroke="#ec8a3a" strokeWidth="2" /><G y={12} s={0.75}><ArrL /></G><path d="M12 12V20M25 12V20M13 16H24M15 14 13 16 15 18M22 14 24 16 22 18" stroke="#111" /></I> },
          { w: 64, lines: [["ﾃﾝﾌﾟﾚｰﾄから", 59]], icon: <I w={24} h={26}><G x={4}><Page /></G><G x={6} y={2}><EBadge /></G><G y={12}><ArrL /></G></I> },
          { w: 72, lines: [["ﾊﾟｰﾂ/ｱｾﾝﾌﾞﾘ", 63], ["から", 19]], icon: <I w={28} h={26}><G x={12} s={0.45}><Part /></G><G x={12} y={11} s={0.55}><Asm /></G><G y={7} s={0.9}><ArrL /></G></I> },
          { w: 78, sep: true, lines: [["ｶﾀﾛｸﾞから作成", 69]], icon: <I w={28} h={24}><path d="M.5.5H22.500V16H.5Z" fill="#fff" stroke="#4b90b8" /><path d="M0 0H23V5H0Z" fill="#2b9ac8" /><path d="M0 10H23M8 5V16M15 5V16" stroke="#6aa0c0" /><G x={10} y={11} s={0.62}><Part /></G><G y={12} s={0.9}><ArrL /></G></I> },
        ]} />
        <Section t="ｴｸｽﾎﾟｰﾄ" tw={42} items={[
          { w: 50, lines: [["ｴｸｽﾎﾟｰﾄ", 41]], icon: <I w={24} h={26}><Page /><G x={11} y={9}><ArrR /></G></I> },
          { w: 51, on: true, lines: [["指定による", 47], ["ｴｸｽﾎﾟｰﾄ", 42]], icon: <I w={26} h={26}><path d="M0 12C6 13 9 3 14 5 18 6 19 12 25 6" stroke="#567" /><path d="M1 6 6 11M6 6 1 11M8 0 13 5M13 0 8 5" stroke="#333" /><circle cx="3.500" cy="8.500" r="1.200" fill="#2b2" /><circle cx="10.500" cy="2.500" r="1.200" fill="#2b2" /><G x={17} y={5} s={0.8}><Cursor /></G><G x={5} y={15} s={0.95}><ArrR /></G></I> },
          { w: 79, lines: [["ﾊﾟｰﾂへｴｸｽﾎﾟｰ", 69], ["ﾄ", 6]], icon: <I w={26} h={26}><G x={1} y={9} s={0.8}><Part /></G><path d="M13 5H25M19 0V10M15 1 23 9M23 1 15 9" stroke="#f5b91e" strokeWidth="1.300" /><circle cx="19" cy="5" r="2.500" fill="#ffe16a" /><G y={15}><ArrR /></G></I> },
          { w: 74, lines: [["製図へｴｸｽﾎﾟｰ", 67], ["ﾄ", 6]], icon: <I w={24} h={26}><G x={2} y={2} s={0.7}><Dwg /></G><G y={14}><ArrR /></G></I> },
          { w: 72, lines: [["NCへｴｸｽﾎﾟｰﾄ", 64]], icon: <I w={28} h={26}><G x={3} s={0.8}><Nc /></G><G y={14}><ArrR /></G></I> },
          { w: 52, sep: true, lines: [["PDF発行", 41]], icon: <I w={30} h={27}><path d="M5 1H23L28 6V26H5Z" fill="#f4f4f4" stroke="#b0b0b0" /><path d="M10 23C15 17 17 12 17 8 17 16 22 20 28 19 20 17 15 19 10 23Z" stroke="#b31b1b" strokeWidth="1.800" /><rect x="3" y="0" width="18" height="9" fill="#b8252b" /><text x="5" y="7.500" fontSize="7.500" fontWeight="700" fill="#fff" fontFamily="Noto Sans">PDF</text><G x={0} y={13}><ArrR /></G></I> },
        ]} />
        <Section t="ﾌｧｲﾙﾂｰﾙ" tw={42} items={[
          { w: 60, lines: [["Cimatron", 47], ["ｴｸｽﾌﾟﾛｰﾗ", 47]], icon: <I w={32} h={32}><path d="M2 4V29M2 4H8M2 16H8M2 29H8" stroke="#222" strokeDasharray="2 1" /><path d="M0 2H3V5H0ZM0 14H3V17H0ZM0 27H3V30H0Z" fill="#fff" stroke="#222" /><G x={8} y={-1} s={0.42}><Asm /></G><G x={21} y={6} s={0.4}><Part /></G><G x={9} y={12} s={0.32}><Dwg /></G><G x={9} y={22} s={0.32}><Nc /></G></I> },
          { w: 52, sep: true, lines: [["圧縮", 22]], icon: <I w={24} h={24}><path d="M5 8 10 3H24V15L19 20H5Z" fill="#ffd65a" stroke="#5a3c08" /><path d="M5 8H19V20M19 8 24 3M10 5H19" stroke="#5a3c08" /><path d="M8 2C-1 3-1 13 8 14H12M10 10 14 14 10 18" stroke="#2058b0" strokeWidth="2" /></I> },
          { w: 48, lines: [["解凍", 22]], icon: <div className="h-8" /> },
          { w: 52, sep: true, lines: [["ﾌﾟﾛｯﾄ", 28]], icon: <div className="h-8" /> },
          { w: 70, sep: true, lines: [["印刷ﾌﾟﾚﾋﾞｭｰ", 63]], icon: <div className="h-8" /> },
          { w: 50, lines: [["印刷", 22]], icon: <div className="h-8" /> },
        ]} />
      </div>
    </div>
  );
}

export default function App() {
  return (
    <div className="relative flex h-[616px] w-[1134px] flex-col overflow-hidden bg-[#f0f0f0] font-['Noto_Sans','Noto_Sans_CJK_JP',sans-serif]">
      <TitleBar />
      <Ribbon />
      <div className="flex flex-1"><FeaturePanel /><Viewport /></div>
      <div className="absolute left-[785px] top-[29px] flex h-[42px] w-[150px] border border-[#829fb5] bg-[#e4eaf0]">
        <div className="flex w-[97px] items-start border-r border-[#829fb5] pl-[7px] pt-[7px]">
          <I w={6} h={9} className="mt-[4px]"><path d="M5 1 1 4.500 5 8" stroke="#444" strokeWidth="2" /></I>
          <I w={20} h={18} className="ml-[7px]"><path d="M11 0 19 5 17 7 15 7 12 11 12 15 8 12 1 18 6 10 3 7 7 6 11 3Z" fill="#8297a7" /></I>
        </div>
        <div className="flex flex-1 items-start pl-[10px] pt-[7px]">
          <I w={6} h={9} className="mt-[5px]"><path d="M1 1 5 4.500 1 8" stroke="#444" strokeWidth="2" /></I>
          <I w={20} h={20} className="ml-[6px]"><circle cx="10" cy="11" r="8.500" fill="#fff" stroke="#9a9a9a" strokeWidth="2" /><path d="M10 5V12H15" stroke="#777" strokeWidth="2" /></I>
        </div>
      </div>
      <FileMenu />
      <svg width="1134" height="616" viewBox="0 0 1134 616" className="pointer-events-none absolute left-0 top-0" fill="none" stroke="#e31b23" strokeWidth="5.500">
        <ellipse cx="394" cy="18.500" rx="34.500" ry="15" />
        <ellipse cx="460" cy="501.500" rx="36.500" ry="36" />
      </svg>
      <div className="absolute left-[482px] top-[543px] flex h-[51px] w-[236px] flex-col gap-[7px] border border-[#777] bg-white pl-[5px] pt-[5px] text-[12px] leading-[14px] text-[#333] shadow-[2px_2px_3px_rgba(0,0,0,0.3)]">
        <T t="指定によるｴｸｽﾎﾟｰﾄ" w={91} className="self-start" />
        <T t="選択した要素を外部ﾌｫｰﾏｯﾄへｴｸｽﾎﾟｰﾄ" w={178} className="self-start text-[#555]" />
      </div>
      <svg width="12" height="19" viewBox="0 0 12 19" className="absolute left-[480px] top-[524px]"><path d="M1 1V15L4.500 12 7 18 9.500 17 7 11H11.500Z" fill="#fff" stroke="#222" /></svg>
    </div>
  );
}
